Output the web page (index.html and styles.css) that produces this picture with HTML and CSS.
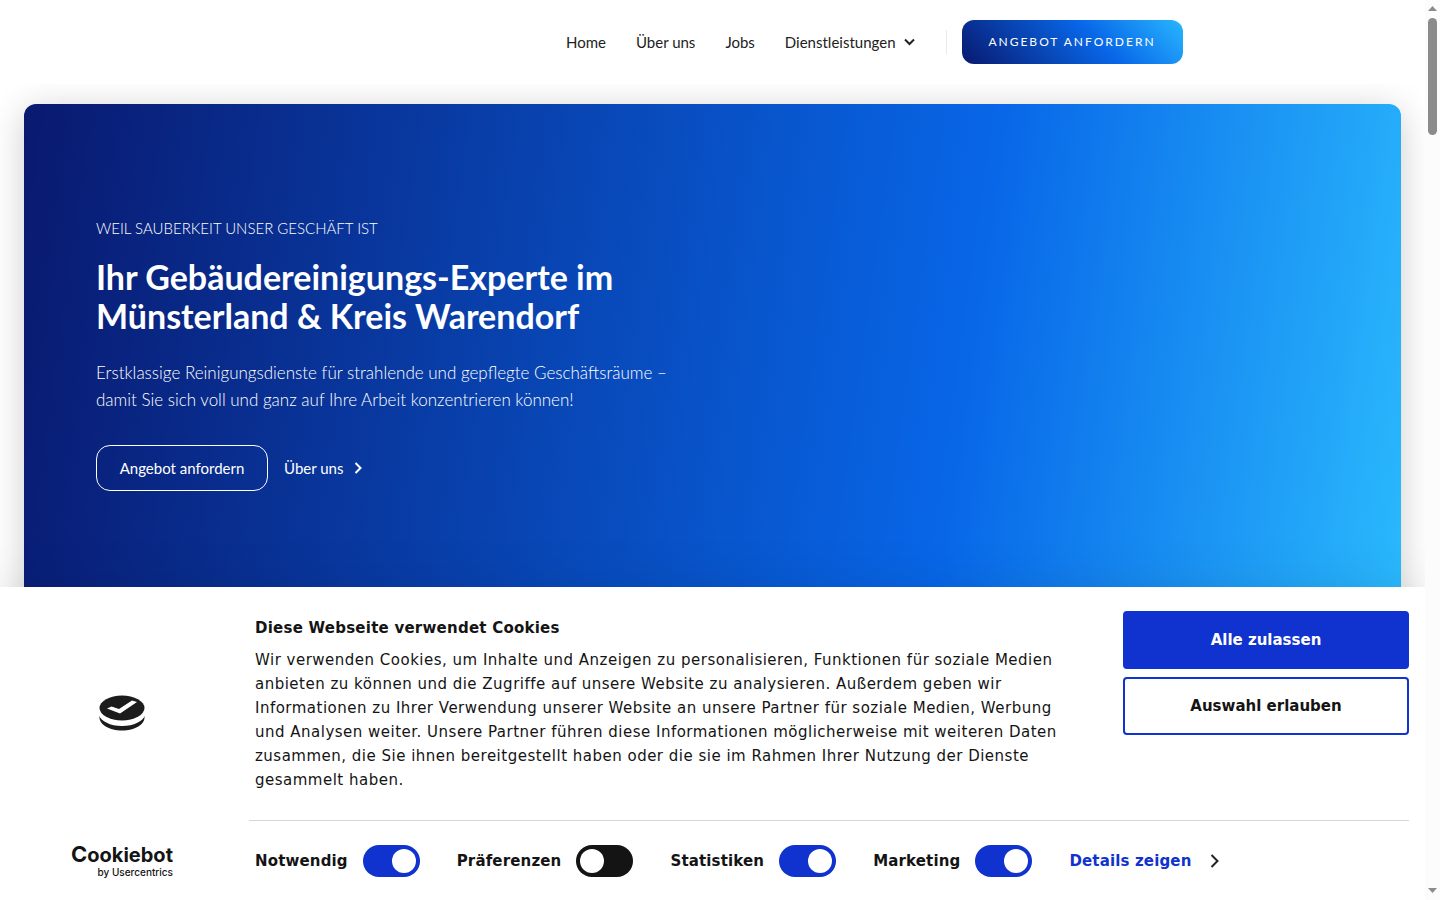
FILE: index.html
```html
<!DOCTYPE html>
<html lang="de">
<head>
    <meta charset="UTF-8">
    <meta name="viewport" content="width=device-width, initial-scale=1.0">
    <title>Gebäudereinigung Münsterland</title>
    <link rel="stylesheet" href="styles.css">
</head>
<body>
    <div class="page">
        <header class="header">
            <nav class="nav">
                <a href="#">Home</a>
                <a href="#">Über uns</a>
                <a href="#">Jobs</a>
                <a href="#" class="has-menu">Dienstleistungen
                    <svg width="11" height="8" viewBox="0 0 11 8"><path d="M1 1.5l4.5 4.5L10 1.5" fill="none" stroke="#222" stroke-width="2"/></svg>
                </a>
                <a href="#" class="cta">Angebot anfordern</a>
            </nav>
        </header>
        <main class="hero">
            <p class="eyebrow">Weil Sauberkeit unser Geschäft ist</p>
            <h1>Ihr Gebäudereinigungs-Experte im<br>Münsterland &amp; Kreis Warendorf</h1>
            <p class="lead">Erstklassige Reinigungsdienste für strahlende und gepflegte Geschäftsräume –<br>damit Sie sich voll und ganz auf Ihre Arbeit konzentrieren können!</p>
            <div class="hero-links">
                <a href="#" class="outline">Angebot anfordern</a>
                <a href="#" class="more">Über uns
                    <svg width="8" height="12" viewBox="0 0 8 12"><path d="M1.5 1l5 5-5 5" fill="none" stroke="#fff" stroke-width="2"/></svg>
                </a>
            </div>
        </main>

        <section class="cookies">
            <div class="brand">
                <svg class="cookie-icon" width="46" height="36" viewBox="0 0 46 36">
                    <path d="M.5 19v3.500C.5 29.700 10.500 35.500 23 35.500s22.500-5.800 22.500-13V19z" fill="#1c1c1c"/>
                    <path d="M0 14v6.500c2 5.500 11 10.500 23 10.500s21-5 23-10.500V14z" fill="#fff"/>
                    <ellipse cx="23" cy="13" rx="22.500" ry="12.500" fill="#1c1c1c"/>
                    <path d="M8 13.500l4.500-2 7.500 2.500L33 5.500l5 1.500L21 18.500z" fill="#fff"/>
                </svg>
                <a href="#" class="cookiebot">
                    <span class="wordmark"><span class="big-c">C</span>ookiebot</span>
                    <span class="by">by Usercentrics</span>
                </a>
            </div>
            <div class="consent">
                <div class="consent-top">
                    <div class="consent-text">
                        <h2>Diese Webseite verwendet Cookies</h2>
                        <p>Wir verwenden Cookies, um Inhalte und Anzeigen zu personalisieren, Funktionen für soziale Medien anbieten zu können und die Zugriffe auf unsere Website zu analysieren. Außerdem geben wir Informationen zu Ihrer Verwendung unserer Website an unsere Partner für soziale Medien, Werbung und Analysen weiter. Unsere Partner führen diese Informationen möglicherweise mit weiteren Daten zusammen, die Sie ihnen bereitgestellt haben oder die sie im Rahmen Ihrer Nutzung der Dienste gesammelt haben.</p>
                    </div>
                    <div class="consent-buttons">
                        <button type="button" class="primary">Alle zulassen</button>
                        <button type="button">Auswahl erlauben</button>
                    </div>
                </div>
                <div class="choices">
                    <label>Notwendig <input type="checkbox" checked></label>
                    <label>Präferenzen <input type="checkbox"></label>
                    <label>Statistiken <input type="checkbox" checked></label>
                    <label>Marketing <input type="checkbox" checked></label>
                    <a href="#" class="details">Details zeigen
                        <svg width="9" height="14" viewBox="0 0 9 14"><path d="M1.500 1l6 6-6 6" fill="none" stroke="#222" stroke-width="2"/></svg>
                    </a>
                </div>
            </div>
        </section>
    </div>
    <div class="scrollbar">
        <svg width="9" height="5" viewBox="0 0 9 5"><path d="M0 5L4.500 0 9 5z" fill="#8b8b8b"/></svg>
        <div class="thumb"></div>
        <svg width="9" height="5" viewBox="0 0 9 5"><path d="M0 0l4.500 5L9 0z" fill="#8b8b8b"/></svg>
    </div>
</body>
</html>
```
FILE: styles.css
```css
*,
*:after,
*:before
{
    margin: 0;
    padding: 0;
    box-sizing: border-box;
}
body
{
    display: flex;
    height: 100vh;
    overflow: hidden;
    font-family: Lato, sans-serif;
    background: #fff;
}
a
{
    color: inherit;
    text-decoration: none;
}
.page
{
    flex: 1;
    min-width: 0;
    position: relative;
    display: flex;
    flex-direction: column;
    overflow: hidden;
}

/* header */
.header
{
    position: relative;
    z-index: 1;
    padding: 20px 0;
    background: #fff;
}
.nav
{
    max-width: 940px;
    margin: 0 auto;
    display: flex;
    justify-content: flex-end;
    align-items: center;
    gap: 30px;
    font-size: 15px;
    color: #222;
}
.has-menu
{
    display: flex;
    align-items: center;
    gap: 8px;
    height: 24px;
    padding-right: 31px;
    margin-right: -15px;
    border-right: 1px solid #e8e8ee;
}
.cta
{
    width: 221px;
    line-height: 44px;
    text-align: center;
    border-radius: 12px;
    background: linear-gradient(45deg, #09196f, #0867e8 60%, #28b6ff);
    color: #fff;
    font-size: 12px;
    letter-spacing: 2px;
    text-transform: uppercase;
}

/* hero */
.hero
{
    flex: 1;
    margin: 20px 24px 0;
    padding: 112px 72px;
    border-radius: 12px 12px 0 0;
    background: linear-gradient(98deg, #09196f, #0867e8 66%, #2dc0ff);
    box-shadow: 0 6px 36px rgba(0,0,0,.2);
    color: #fff;
}
.eyebrow
{
    font-size: 15px;
    line-height: 24px;
    font-weight: 300;
    text-transform: uppercase;
}
h1
{
    margin-top: 17px;
    font-size: 34px;
    line-height: 39px;
}
.lead
{
    margin-top: 24px;
    font-size: 17px;
    line-height: 27px;
    font-weight: 300;
}
.hero-links
{
    display: flex;
    align-items: center;
    gap: 16px;
    margin-top: 32px;
    font-size: 15px;
}
.outline
{
    width: 172px;
    line-height: 44px;
    text-align: center;
    border: 1px solid #fff;
    border-radius: 14px;
}
.more
{
    display: flex;
    align-items: center;
    gap: 11px;
}

/* cookie banner */
.cookies
{
    position: absolute;
    left: 0;
    right: 0;
    bottom: 0;
    z-index: 2;
    display: flex;
    gap: 21px;
    padding: 24px 16px 0;
    background: #fff;
    box-shadow: 0 32px 68px rgba(0,0,0,.3);
    font-family: "DejaVu Sans", sans-serif;
    font-size: 15px;
    color: #141414;
}
.brand
{
    width: 212px;
    display: flex;
    flex-direction: column;
    align-items: center;
    justify-content: space-between;
    padding: 84px 0 22px;
}
.cookiebot
{
    display: flex;
    flex-direction: column;
    align-items: flex-end;
    font-family: Inter, sans-serif;
}
.wordmark
{
    font-size: 20px;
    line-height: 22px;
    font-weight: 700;
}
.big-c
{
    font-size: 22px;
}
.by
{
    font-size: 10px;
    line-height: 12px;
    font-weight: 500;
}
.consent
{
    flex: 1;
    min-width: 0;
}
.consent-top
{
    display: flex;
    gap: 48px;
    padding: 0 0 28px 6px;
}
.consent-text
{
    flex: 1;
    padding-top: 5px;
    letter-spacing: .033em;
    line-height: 24px;
}
h2
{
    margin-bottom: 8px;
    font-size: 15px;
    line-height: 24px;
    letter-spacing: .016em;
}
.consent-buttons
{
    width: 286px;
    display: flex;
    flex-direction: column;
    gap: 8px;
}
.consent-buttons button
{
    height: 58px;
    border: 2px solid #1032cf;
    border-radius: 4px;
    background: #fff;
    color: #141414;
    font: bold 15px "DejaVu Sans", sans-serif;
    cursor: pointer;
}
.consent-buttons .primary
{
    background: #1032cf;
    color: #fff;
}
.choices
{
    display: flex;
    align-items: center;
    gap: 37px;
    height: 80px;
    padding-left: 6px;
    border-top: 1px solid #d6d6d6;
    font-weight: bold;
    letter-spacing: .01em;
}
.choices label
{
    display: flex;
    align-items: center;
    gap: 15px;
}
.choices input
{
    appearance: none;
    width: 57px;
    height: 32px;
    padding: 4px;
    border-radius: 16px;
    background: #141414;
    cursor: pointer;
}
.choices input:before
{
    content: "";
    display: block;
    width: 24px;
    height: 24px;
    border-radius: 50%;
    background: #fff;
}
.choices input:checked
{
    background: #1032cf;
}
.choices input:checked:before
{
    margin-left: auto;
}
.details
{
    display: flex;
    align-items: center;
    gap: 18px;
    color: #1032cf;
}

/* scrollbar */
.scrollbar
{
    width: 15px;
    display: flex;
    flex-direction: column;
    align-items: center;
    padding: 6px 0 7px;
    background: #fcfcfc;
}
.thumb
{
    width: 9px;
    height: 117px;
    margin: 7px 0 auto;
    border-radius: 5px;
    background: #8b8b8b;
}
```
